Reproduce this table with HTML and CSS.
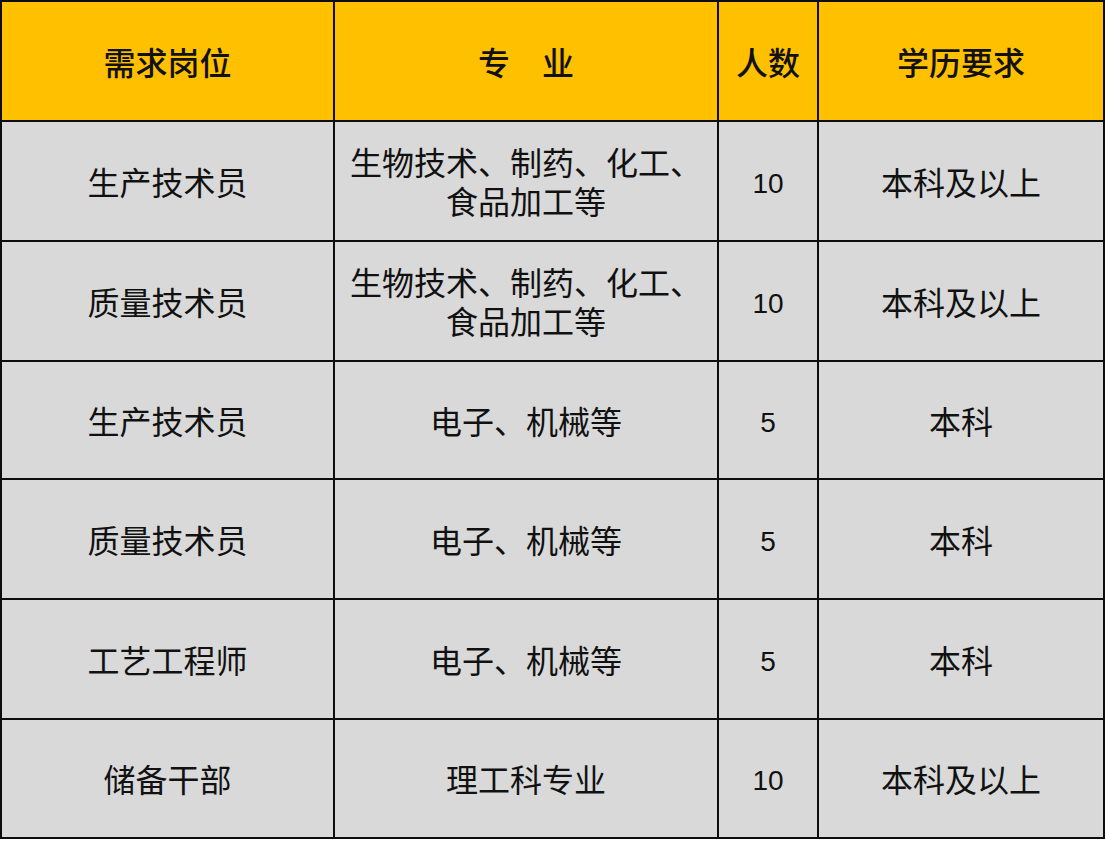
FILE: index.html
```html
<!DOCTYPE html>
<html lang="zh-CN">
<head>
<meta charset="utf-8">
<title>招聘岗位</title>
<link rel="stylesheet" href="styles.css">
</head>
<body>
<table class="jobs">
  <colgroup>
    <col class="c-pos">
    <col class="c-major">
    <col class="c-num">
    <col class="c-edu">
  </colgroup>
  <thead>
    <tr class="head">
      <th>需求岗位</th>
      <th>专&emsp;业</th>
      <th>人数</th>
      <th>学历要求</th>
    </tr>
  </thead>
  <tbody>
    <tr class="r1">
      <td>生产技术员</td>
      <td>生物技术、制药、化工、<br>食品加工等</td>
      <td class="num">10</td>
      <td>本科及以上</td>
    </tr>
    <tr class="r2">
      <td>质量技术员</td>
      <td>生物技术、制药、化工、<br>食品加工等</td>
      <td class="num">10</td>
      <td>本科及以上</td>
    </tr>
    <tr class="r3">
      <td>生产技术员</td>
      <td>电子、机械等</td>
      <td class="num">5</td>
      <td>本科</td>
    </tr>
    <tr class="r4">
      <td>质量技术员</td>
      <td>电子、机械等</td>
      <td class="num">5</td>
      <td>本科</td>
    </tr>
    <tr class="r5">
      <td>工艺工程师</td>
      <td>电子、机械等</td>
      <td class="num">5</td>
      <td>本科</td>
    </tr>
    <tr class="r6">
      <td>储备干部</td>
      <td>理工科专业</td>
      <td class="num">10</td>
      <td>本科及以上</td>
    </tr>
  </tbody>
</table>
</body>
</html>
```

FILE: styles.css
```css
html, body {
  margin: 0;
  padding: 0;
  background: #ffffff;
}

.jobs {
  border-collapse: collapse;
  table-layout: fixed;
  width: 1103px;
  font-family: "Noto Sans CJK SC", "Liberation Sans", sans-serif;
  color: #111111;
}

.c-pos { width: 333px; }
.c-major { width: 384px; }
.c-num { width: 100px; }
.c-edu { width: 286px; }

.jobs th,
.jobs td {
  border: 2px solid #0d0d0d;
  text-align: center;
  vertical-align: middle;
  padding: 0;
  font-size: 32px;
  line-height: 39px;
}

.jobs th {
  background: #ffc000;
  font-weight: 500;
  height: 118px;
}

.jobs td {
  background: #d9d9d9;
  font-weight: 400;
  height: 118px;
}

.jobs tr.r3 td { height: 116px; }
.jobs tr.r6 td { height: 117px; }

.jobs td.num {
  font-family: "Liberation Sans", sans-serif;
  font-size: 28px;
  padding-top: 4px;
  height: 114px;
}

.jobs tr.r3 td.num { height: 112px; }
.jobs tr.r6 td.num { height: 113px; }
```
